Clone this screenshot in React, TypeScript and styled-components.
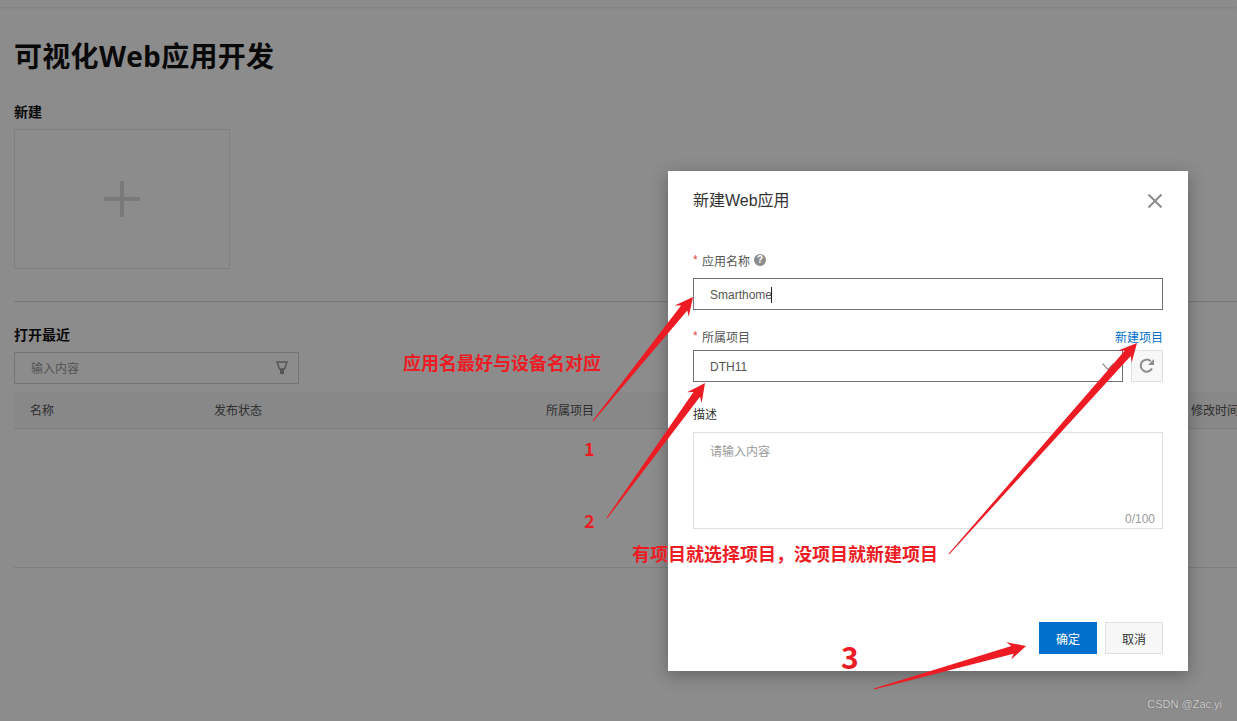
import React from 'react'
import styled, { createGlobalStyle } from 'styled-components'

const GlobalStyle = createGlobalStyle`
  html, body {
    margin: 0;
    height: 100%;
    overflow: hidden;
    background: #fff;
    font-family: "Liberation Sans", "Noto Sans CJK SC", sans-serif;
  }
`

const Page = styled.div`
  position: relative;
  width: 1237px;
  height: 721px;
  overflow: hidden;
  background: #fff;
`

const TopBar = styled.div`
  height: 7px;
  box-shadow: 0 1px 3px rgba(0, 0, 0, 0.08);
`

const Main = styled.main`
  width: 1260px;
  padding-left: 14px;
`

const Title = styled.h1`
  margin: 0;
  padding-top: 29px;
  height: 42px;
  font-family: "Open Sans", "Noto Sans CJK SC", sans-serif;
  font-size: 28px;
  line-height: 41px;
  font-weight: 700;
  letter-spacing: 0.3px;
  color: #111;
`

const SectionTitle = styled.h2`
  margin: 0;
  font-size: 14px;
  line-height: 20px;
  font-weight: 700;
  color: #111;
`

const CreateSection = styled.section`
  padding-top: 24px;
  padding-bottom: 32px;
  border-bottom: 1px solid #d9d9d9;
  & > h2 {
    margin-bottom: 7px;
  }
`

const CreateCard = styled.div`
  width: 214px;
  height: 138px;
  border: 1px solid #eaeaea;
  display: flex;
  align-items: center;
  justify-content: center;
`

const RecentSection = styled.section`
  padding-top: 23px;
`

const SearchBox = styled.div`
  width: 285px;
  height: 32px;
  margin-top: 7px;
  box-sizing: border-box;
  border: 1px solid #d4d4d4;
  padding: 0 10px 1px 16px;
  display: flex;
  align-items: center;
  justify-content: space-between;
  font-size: 12px;
  color: #999;
`

const TableHead = styled.div`
  height: 35px;
  margin-top: 8px;
  padding-left: 16px;
  padding-bottom: 1px;
  display: grid;
  grid-template-columns: 184px 332px 645px 80px;
  align-items: center;
  background: #f7f7f7;
  border-bottom: 1px solid #e6e6e6;
  font-size: 12px;
  color: #555;
`

const TableBody = styled.div`
  height: 138px;
  border-bottom: 1px solid #e6e6e6;
`

const Overlay = styled.div`
  position: absolute;
  inset: 0;
  background: rgba(0, 0, 0, 0.45);
`

const Modal = styled.div`
  position: absolute;
  left: 668px;
  top: 171px;
  width: 520px;
  height: 500px;
  box-sizing: border-box;
  padding: 0 25px;
  background: #fff;
  box-shadow: 0 4px 16px rgba(0, 0, 0, 0.3);
  display: flex;
  flex-direction: column;
`

const ModalHeader = styled.div`
  height: 55px;
  display: flex;
  align-items: center;
  justify-content: space-between;
  font-size: 16px;
  color: #333;
`

const CloseButton = styled.span`
  display: flex;
  margin: 4px 1px 0 0;
`

const Form = styled.div`
  flex: 1;
  padding-top: 24px;
  display: flex;
  flex-direction: column;
`

const Field = styled.div<{ $gap?: number }>`
  margin-bottom: ${p => p.$gap ?? 16}px;
`

const LabelRow = styled.div<{ $gap?: number }>`
  height: 20px;
  margin-bottom: ${p => p.$gap ?? 8}px;
  display: flex;
  align-items: center;
  justify-content: space-between;
  font-size: 12px;
  color: #555;
`

const Label = styled.span<{ $dark?: boolean }>`
  display: flex;
  align-items: center;
  color: ${p => (p.$dark ? '#333' : '#555')};
`

const Star = styled.span`
  width: 9px;
  color: #e04a3f;
  font-size: 12px;
`

const HelpIcon = styled.span`
  width: 12px;
  height: 12px;
  margin-left: 4px;
  border-radius: 50%;
  background: #8c8c8c;
  color: #fff;
  font-size: 10px;
  font-weight: 700;
  line-height: 12px;
  text-align: center;
`

const LinkText = styled.a`
  color: #0070cc;
  font-size: 12px;
`

const InputBox = styled.div<{ $flex?: boolean }>`
  height: 32px;
  box-sizing: border-box;
  border: 1px solid #707070;
  padding: 1px 16px 0;
  display: flex;
  align-items: center;
  font-size: 12px;
  color: #555;
  ${p => (p.$flex ? 'flex: 1; justify-content: space-between; padding-right: 8px;' : '')}
`

const Caret = styled.span`
  width: 1px;
  height: 16px;
  margin-left: -1px;
  background: #222;
`

const SelectRow = styled.div`
  display: flex;
  gap: 8px;
`

const IconButton = styled.div`
  width: 32px;
  height: 32px;
  box-sizing: border-box;
  background: #f7f7f7;
  border: 1px solid #e0e0e0;
  display: flex;
  align-items: center;
  justify-content: center;
`

const TextArea = styled.div`
  position: relative;
  height: 97px;
  box-sizing: border-box;
  border: 1px solid #e0e0e0;
  padding: 10px 16px;
  font-size: 12px;
  line-height: 18px;
  color: #999;
`

const Counter = styled.span`
  position: absolute;
  right: 7px;
  bottom: 0;
  color: #999;
`

const Footer = styled.div`
  height: 49px;
  display: flex;
  justify-content: flex-end;
  align-items: flex-start;
  gap: 8px;
`

const Button = styled.button<{ $primary?: boolean }>`
  width: 58px;
  height: 32px;
  box-sizing: border-box;
  padding: 1px 0 0;
  font: inherit;
  font-size: 12px;
  color: ${p => (p.$primary ? '#fff' : '#333')};
  background: ${p => (p.$primary ? '#0070cc' : '#f7f7f7')};
  border: 1px solid ${p => (p.$primary ? '#0070cc' : '#e0e0e0')};
`

const ArrowLayer = styled.svg`
  position: absolute;
  inset: 0;
  pointer-events: none;
`

const Note = styled.span<{ $x: number; $y: number; $size?: number }>`
  position: absolute;
  left: ${p => p.$x}px;
  top: ${p => p.$y}px;
  font-family: "Noto Sans CJK SC", sans-serif;
  font-size: ${p => p.$size ?? 18}px;
  line-height: 26px;
  font-weight: 700;
  color: #ed1c24;
  white-space: nowrap;
`

const Watermark = styled.span`
  position: absolute;
  right: 15px;
  top: 697px;
  font-size: 11px;
  line-height: 14px;
  color: #d0d0d0;
  text-shadow: 0 0 1px #555;
`

// tapered annotation arrow: thin at the tail, widening up to the head
const arrowPoints = (x1: number, y1: number, x2: number, y2: number, head = 18, barb = 9, neck = 4) => {
  const len = Math.hypot(x2 - x1, y2 - y1)
  const ux = (x2 - x1) / len
  const uy = (y2 - y1) / len
  const nx = -uy
  const ny = ux
  const bx = x2 - ux * head
  const by = y2 - uy * head
  const nk = x2 - ux * (head - 4)
  const nl = y2 - uy * (head - 4)
  const pts = [
    [x1 + nx * 0.5, y1 + ny * 0.5],
    [nk + nx * neck, nl + ny * neck],
    [bx + nx * barb, by + ny * barb],
    [x2, y2],
    [bx - nx * barb, by - ny * barb],
    [nk - nx * neck, nl - ny * neck],
    [x1 - nx * 0.5, y1 - ny * 0.5],
  ]
  return pts.map(p => `${p[0].toFixed(1)},${p[1].toFixed(1)}`).join(' ')
}

const arrows = [
  [593, 421, 693, 297],
  [607, 518, 705, 383],
  [949, 554, 1137, 343],
  [874, 689, 1026, 646],
]

const Plus = () => (
  <svg width="36" height="36" viewBox="0 0 36 36">
    <rect x="16" width="4" height="36" fill="#dcdcdc" />
    <rect y="16" width="36" height="4" fill="#dcdcdc" />
  </svg>
)

const FilterIcon = () => (
  <svg width="12" height="14" viewBox="0 0 12 14">
    <path d="M1 1h10L8.5 8H3.5z" fill="none" stroke="#999" strokeWidth="1.4" />
    <rect x="4" y="8" width="4" height="5" fill="#999" />
  </svg>
)

const CloseIcon = () => (
  <svg width="14" height="14" viewBox="0 0 14 14">
    <path d="M0.5 0.5l13 13M13.5 0.5l-13 13" stroke="#8c8c8c" strokeWidth="2" fill="none" />
  </svg>
)

const Chevron = () => (
  <svg width="12" height="8" viewBox="0 0 12 8">
    <path d="M0.5 0.5L6 6.5l5.5-6" stroke="#999" strokeWidth="1.3" fill="none" />
  </svg>
)

const RefreshIcon = () => (
  <svg width="16" height="16" viewBox="0 0 16 16">
    <path d="M13 10.5A6 6 0 1 1 11.8 3.2" stroke="#8c8c8c" strokeWidth="2" fill="none" />
    <path d="M15 1v6H9z" fill="#8c8c8c" />
  </svg>
)

export default function App() {
  return (
    <Page>
      <GlobalStyle />
      <TopBar />
      <Main>
        <Title>可视化Web应用开发</Title>
        <CreateSection>
          <SectionTitle>新建</SectionTitle>
          <CreateCard>
            <Plus />
          </CreateCard>
        </CreateSection>
        <RecentSection>
          <SectionTitle>打开最近</SectionTitle>
          <SearchBox>
            <span>输入内容</span>
            <FilterIcon />
          </SearchBox>
          <TableHead>
            <span>名称</span>
            <span>发布状态</span>
            <span>所属项目</span>
            <span>修改时间</span>
          </TableHead>
          <TableBody />
        </RecentSection>
      </Main>
      <Overlay />
      <Modal>
        <ModalHeader>
          <span>新建Web应用</span>
          <CloseButton>
            <CloseIcon />
          </CloseButton>
        </ModalHeader>
        <Form>
          <Field>
            <LabelRow>
              <Label>
                <Star>*</Star>应用名称<HelpIcon>?</HelpIcon>
              </Label>
            </LabelRow>
            <InputBox>
              Smarthome
              <Caret />
            </InputBox>
          </Field>
          <Field $gap={21}>
            <LabelRow $gap={4}>
              <Label>
                <Star>*</Star>所属项目
              </Label>
              <LinkText>新建项目</LinkText>
            </LabelRow>
            <SelectRow>
              <InputBox $flex>
                DTH11
                <Chevron />
              </InputBox>
              <IconButton>
                <RefreshIcon />
              </IconButton>
            </SelectRow>
          </Field>
          <Field $gap={0}>
            <LabelRow $gap={9}>
              <Label $dark>描述</Label>
            </LabelRow>
            <TextArea>
              请输入内容
              <Counter>0/100</Counter>
            </TextArea>
          </Field>
        </Form>
        <Footer>
          <Button $primary>确定</Button>
          <Button>取消</Button>
        </Footer>
      </Modal>
      <ArrowLayer width="1237" height="721" viewBox="0 0 1237 721">
        {arrows.map(a => (
          <polygon key={a.join()} points={arrowPoints(a[0], a[1], a[2], a[3])} fill="#ed1c24" />
        ))}
      </ArrowLayer>
      <Note $x={403} $y={349}>应用名最好与设备名对应</Note>
      <Note $x={584} $y={435}>1</Note>
      <Note $x={584} $y={507}>2</Note>
      <Note $x={632} $y={540}>有项目就选择项目，没项目就新建项目</Note>
      <Note $x={841} $y={643} $size={30}>3</Note>
      <Watermark>CSDN @Zac.yi</Watermark>
    </Page>
  )
}
